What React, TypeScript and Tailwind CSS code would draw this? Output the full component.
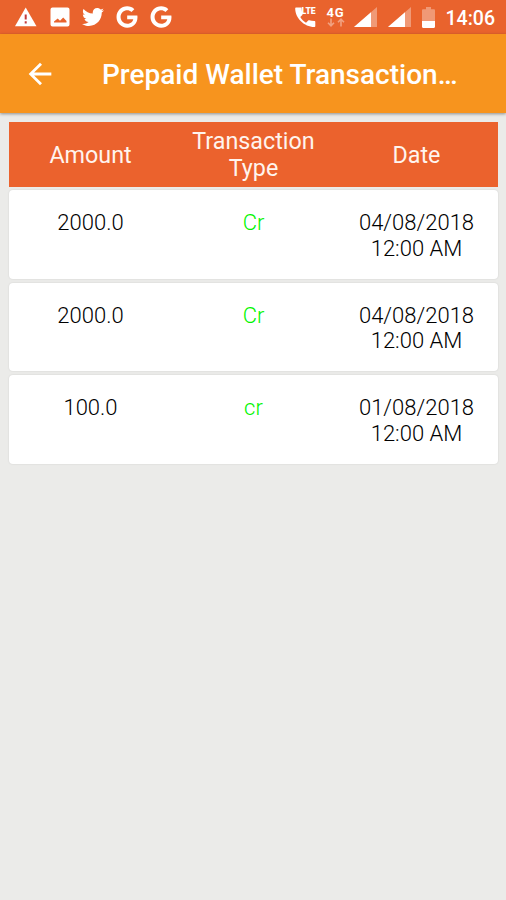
import { FaGoogle, FaTwitter } from "react-icons/fa";
import { MdArrowBack } from "react-icons/md";

type Transaction = {
  amount: string;
  type: string;
  date: string;
  time: string;
};

const transactions: Transaction[] = [
  { amount: "2000.0", type: "Cr", date: "04/08/2018", time: "12:00 AM" },
  { amount: "2000.0", type: "Cr", date: "04/08/2018", time: "12:00 AM" },
  { amount: "100.0", type: "cr", date: "01/08/2018", time: "12:00 AM" },
];

function WarningIcon() {
  return (
    <svg width="24" height="20" viewBox="0 0 24 20">
      <path d="M11.700 0.500L22.500 19.200H1z" fill="currentColor" />
      <path d="M10.700 7.500h2v5h-2zM10.700 14.200h2v2.200h-2z" fill="#c43a3a" />
    </svg>
  );
}

function PhotoIcon() {
  return (
    <svg width="20" height="20" viewBox="0 0 20 20" fill="currentColor">
      <path
        fillRule="evenodd"
        d="M2.500 0.500h15a2 2 0 0 1 2 2v15a2 2 0 0 1-2 2h-15a2 2 0 0 1-2-2v-15a2 2 0 0 1 2-2zM4 15.500h12.500v-1.500l-3.300-3.500-3.200 3.200-2.300-2.200-3.700 3z"
      />
    </svg>
  );
}

function VolteIcon() {
  return (
    <svg width="21" height="21" viewBox="0 0 21 21" fill="currentColor">
      <path d="M1.200 .5h4.400c.6 0 1 .4 1 1 0 1.800.4 3.600 1 5.300.1.400 0 .8-.3 1.100L5.300 10c1.400 2.500 3.200 4.300 5.700 5.700l2.200-2.200c.3-.3.700-.4 1.100-.3 1.500.5 3.200.8 5 .8.600 0 1 .4 1 1v4c0 .6-.4 1-1 1C9.200 20 .2 11 .2 1.500c0-.6.4-1 1-1z" />
      <text x="6.600" y="7" fontFamily="Roboto, sans-serif" fontSize="9" fontWeight="900" textLength="14" lengthAdjust="spacingAndGlyphs">
        LTE
      </text>
    </svg>
  );
}

function NetworkIcon() {
  return (
    <div className="flex w-[18px] flex-col items-center">
      <span className="text-[13px] font-bold leading-[11px] tracking-[0.8px]">4G</span>
      <svg width="18" height="9" viewBox="0 0 18 9" fill="none" stroke="currentColor" strokeWidth="1.6" opacity="0.4">
        <path d="M4 0.500v7M1 4.800l3 3 3-3M14 8.500v-7M11 4.200l3-3 3 3" />
      </svg>
    </div>
  );
}

function SignalIcon() {
  return (
    <svg width="23" height="20" viewBox="0 0 23 20" fill="currentColor">
      <path d="M23 0v20H0z" opacity="0.35" />
      <path d="M17 5.200V20H0z" />
    </svg>
  );
}

function BatteryIcon() {
  return (
    <svg width="13" height="21" viewBox="0 0 13 21" fill="currentColor">
      <path d="M4 0h5v2.300h2.800c.7 0 1.200.5 1.200 1.200V14H0V3.500c0-.7.500-1.200 1.200-1.200H4z" opacity="0.35" />
      <path d="M0 14h13v5.800c0 .7-.5 1.200-1.200 1.200H1.200C.5 21 0 20.500 0 19.800z" />
    </svg>
  );
}

function StatusBar() {
  return (
    <div className="flex h-[34px] items-center justify-between bg-[#e9632d] pl-[14px] pr-[11px] text-white">
      <div className="flex items-center gap-3">
        <WarningIcon />
        <PhotoIcon />
        <FaTwitter size={22} />
        <FaGoogle size={22} />
        <FaGoogle size={22} />
      </div>
      <div className="flex items-center">
        <VolteIcon />
        <div className="ml-[11px] mr-[9px]">
          <NetworkIcon />
        </div>
        <SignalIcon />
        <div className="ml-[11px] mr-[11px]">
          <SignalIcon />
        </div>
        <BatteryIcon />
        <span className="ml-[11px] pt-[3px] text-[19.500px] font-medium leading-6">14:06</span>
      </div>
    </div>
  );
}

export default function App() {
  return (
    <div className="min-h-screen bg-[#ebebe9] font-['Roboto',sans-serif]">
      <StatusBar />
      <header className="flex h-[79px] items-center bg-[#f7941e] pl-[23px] text-white shadow-[0_1px_3px_rgba(0,0,0,0.4)]">
        <MdArrowBack size={34} />
        <h1 className="ml-[45px] w-[360px] whitespace-nowrap pt-[3px] text-[28px] font-medium">Prepaid Wallet Transaction…</h1>
      </header>

      <main className="pl-[9px] pr-2 pt-[9px]">
        <div className="grid h-[65px] grid-cols-3 items-center bg-[#eb622d] pt-[1px] text-center text-[23.300px] leading-[27px] text-[#fff4ee]">
          <div>Amount</div>
          <div>
            Transaction
            <br />
            Type
          </div>
          <div>Date</div>
        </div>

        <div className="mt-[3px] flex flex-col gap-1">
          {transactions.map((t, i) => (
            <div
              key={i}
              className="grid h-[88.500px] grid-cols-3 rounded-[4px] bg-white pt-5 text-center text-[22px] font-light leading-[25.500px] text-black shadow-[0_0_2px_rgba(0,0,0,0.12)]"
            >
              <div>{t.amount}</div>
              <div className="text-[#00f500]">{t.type}</div>
              <div>
                {t.date}
                <br />
                {t.time}
              </div>
            </div>
          ))}
        </div>
      </main>
    </div>
  );
}
